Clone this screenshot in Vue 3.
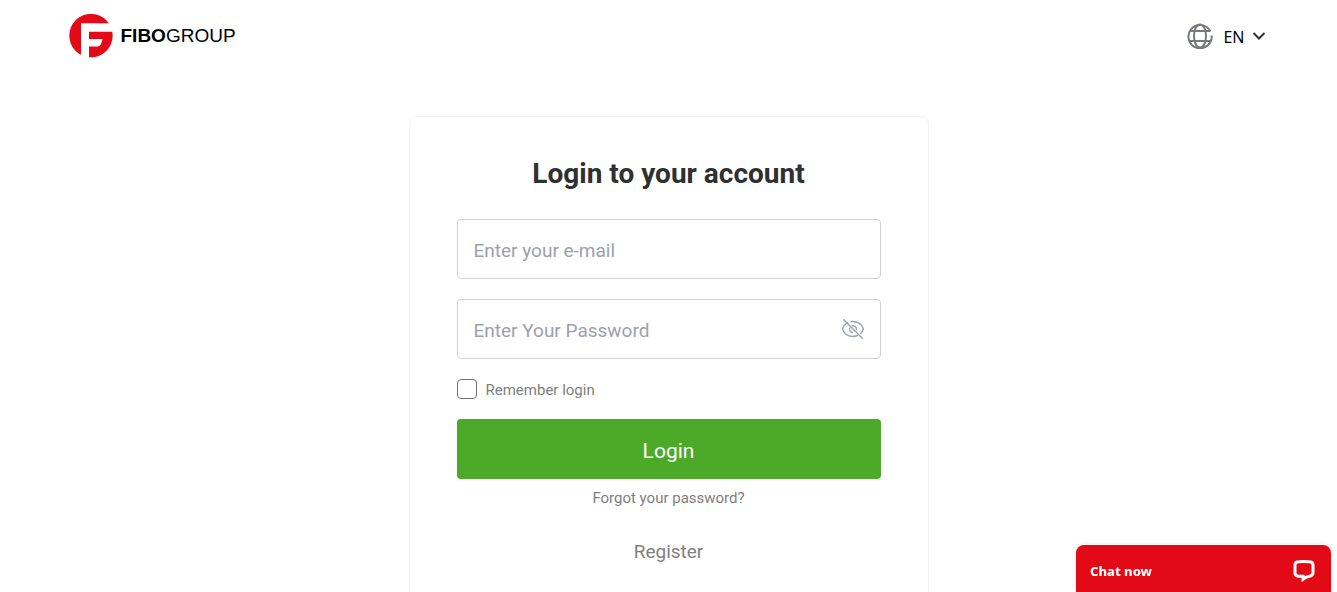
<script setup>
import { ref } from 'vue'

const email = ref('')
const password = ref('')
const remember = ref(false)
const visible = ref(false)
</script>

<template>
  <div class="page">
    <header class="header">
      <a class="brand" href="#" aria-label="FIBOGROUP">
        <svg width="44" height="44" viewBox="0 0 44 44" aria-hidden="true">
          <circle cx="22" cy="21.6" r="21.7" fill="#e30a17" />
          <path d="M12 9.2H44V17.8H20V25H33.6Q32 32.6 28.6 32.6H20V44H12Z" fill="#fff" />
        </svg>
        <span class="brand-name"><b>FIBO</b>GROUP</span>
      </a>
      <button class="lang" type="button">
        <svg width="26" height="26" viewBox="0 0 26 26" fill="none" stroke="#77797c" stroke-width="2" aria-hidden="true">
          <path d="M23.4 8.400A11.6 11.6 0 1 0 24.6 12.500" />
          <ellipse cx="13" cy="13" rx="6" ry="11.6" />
          <path d="M2.6 8H23.500M2.6 18H23.4" />
        </svg>
        <span>EN</span>
        <svg class="chevron" width="14" height="10" viewBox="0 0 14 10" fill="none" stroke="#333" stroke-width="2" aria-hidden="true">
          <path d="M1.5 2 7 7.5 12.5 2" />
        </svg>
      </button>
    </header>

    <main class="card">
      <h1>Login to your account</h1>
      <form @submit.prevent>
        <input v-model="email" class="field" type="email" placeholder="Enter your e-mail" aria-label="Enter your e-mail" />
        <div class="password">
          <input v-model="password" class="field" :type="visible ? 'text' : 'password'" placeholder="Enter Your Password" aria-label="Enter Your Password" />
          <button class="eye" type="button" aria-label="Show password" @click="visible = !visible">
            <svg width="24" height="22" viewBox="0 0 24 22" fill="none" stroke="#9ca3b3" stroke-width="1.5" aria-hidden="true">
              <path d="M7.2 4.4C4.4 5.6 2.2 8.2 1.6 11c1.2 4.3 5.3 7.4 10.4 7.4 1.8 0 3.4-.4 4.9-1.1M9.6 3.7C16.2 2.7 21.3 6.3 22.4 11c-.5 1.8-1.5 3.4-2.9 4.7" />
              <path d="M9 9.300c-1.300 2.600 .3 5 3 5.100M10.500 7.900c3-.9 5.300 1.100 4.900 3.900" />
              <path d="M2.3 1.3 21.8 20.7" />
            </svg>
          </button>
        </div>
        <label class="remember">
          <input v-model="remember" type="checkbox" />
          <span>Remember login</span>
        </label>
        <button class="submit" type="submit">Login</button>
      </form>
      <a class="forgot" href="#">Forgot your password?</a>
      <a class="register" href="#">Register</a>
    </main>

    <button class="chat" type="button">
      <span>Chat now</span>
      <svg width="22" height="22" viewBox="0 0 22 22" fill="none" stroke="#fff" stroke-width="3" aria-hidden="true">
        <path d="M10 16.300H5.500Q2 16 2 12.800V4.800Q2 1.800 5.500 1.700Q11 1.300 16.500 1.700Q20 1.800 20 4.800V12.800Q20 15.600 16.500 16.200Q13.500 16.600 10 19.200Z" />
      </svg>
    </button>
  </div>
</template>

<style>
body {
  background: #fff;
}
</style>

<style scoped>
* {
  box-sizing: border-box;
}
.page {
  height: 100vh;
  overflow: hidden;
  font-family: Roboto, "Open Sans", sans-serif;
}
a {
  text-decoration: none;
}
button {
  border: 0;
  padding: 0;
  background: none;
  font-family: inherit;
  cursor: pointer;
}
.header {
  display: flex;
  align-items: center;
  justify-content: space-between;
  max-width: 1200px;
  height: 72px;
  margin: 0 auto;
}
.brand {
  display: flex;
  align-items: center;
  gap: 8px;
  color: #000;
}
.brand-name {
  font: 19px/24px "Liberation Sans", Arial, sans-serif;
}
.lang {
  display: flex;
  align-items: center;
  color: #000;
  font: 16px/24px "Noto Sans", sans-serif;
}
.lang span {
  margin: 2px 7px 0 10px;
}
.chevron {
  margin-right: 3px;
}
.card {
  display: flex;
  flex-direction: column;
  align-items: center;
  width: 100%;
  max-width: 520px;
  margin: 44px auto 0;
  padding: 39px 47px 64px;
  border: 1px solid #f3f3f3;
  border-radius: 8px;
}
h1 {
  margin: 0 0 27px;
  color: #303030;
  font-size: 28px;
  line-height: 36px;
  font-weight: 700;
}
form {
  display: flex;
  flex-direction: column;
  gap: 20px;
  width: 100%;
}
.field {
  width: 100%;
  height: 60px;
  padding: 2px 16px 0;
  border: 1px solid #d1d1db;
  border-radius: 4px;
  background: #fff;
  color: #303030;
  font: inherit;
  font-size: 19px;
  outline: none;
}
.field::placeholder {
  color: #9ca0b0;
  opacity: 1;
}
.password {
  position: relative;
}
.password .field {
  display: block;
  padding-right: 56px;
}
.eye {
  position: absolute;
  top: 19px;
  right: 16px;
  height: 22px;
}
.eye svg {
  display: block;
}
.remember {
  display: flex;
  align-items: center;
  gap: 9px;
  height: 20px;
  color: #808080;
  font-size: 15px;
  line-height: 20px;
}
.remember input {
  appearance: none;
  width: 20px;
  height: 20px;
  margin: 0;
  border: 1px solid #707070;
  border-radius: 4px;
  background: #fff;
}
.remember input:checked {
  background: #4da928;
}
.remember span {
  padding-top: 2px;
}
.submit {
  height: 60px;
  padding-top: 4px;
  border-radius: 4px;
  background: #4da928;
  color: #fff;
  font-size: 21px;
}
.forgot {
  margin-top: 9px;
  color: #808080;
  font-size: 15px;
  line-height: 20px;
}
.register {
  margin-top: 32px;
  color: #808080;
  font-size: 19px;
  line-height: 24px;
}
.chat {
  position: fixed;
  right: 6px;
  bottom: 0;
  display: flex;
  align-items: center;
  justify-content: space-between;
  width: 255px;
  height: 47px;
  padding: 4px 16px 0 14px;
  border-radius: 8px 8px 0 0;
  background: #e30a17;
  box-shadow: 0 0 6px rgba(0, 0, 0, 0.1);
  color: #fff;
  font: 800 13px/20px "Noto Sans", "Open Sans", sans-serif;
}
</style>
